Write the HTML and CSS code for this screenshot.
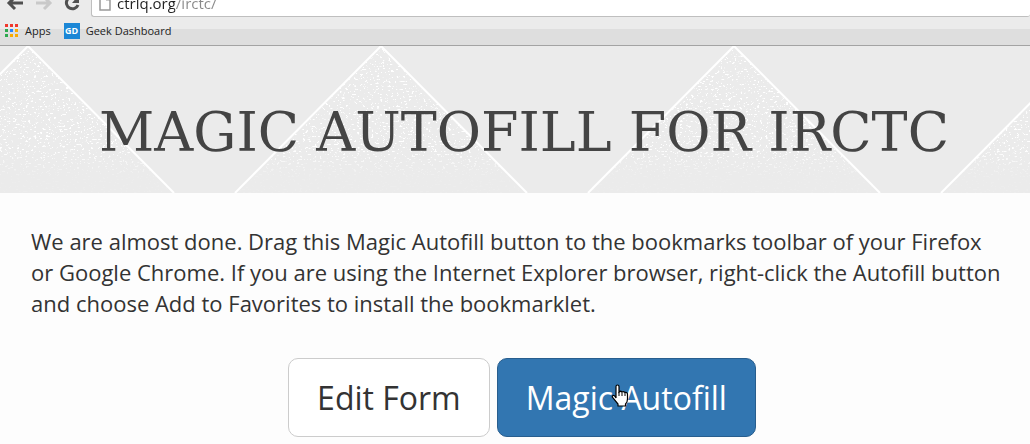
FILE: index.html
```
<!DOCTYPE html>
<html lang="en">
<head>
<meta charset="utf-8">
<title>Magic Autofill for IRCTC</title>
<link rel="stylesheet" href="styles.css">
</head>
<body>
<header class="browser">
  <div class="toolbar">
    <button class="nav" aria-label="Back"><svg width="18" height="18" viewBox="0 0 18 18"><path d="M17 9H4M9 3L3 9l6 6" fill="none" stroke="#505050" stroke-width="3"/></svg></button>
    <button class="nav" aria-label="Forward" disabled><svg width="18" height="18" viewBox="0 0 18 18"><path d="M1 9h13M9 3l6 6-6 6" fill="none" stroke="#c9c9c9" stroke-width="3"/></svg></button>
    <button class="nav" aria-label="Reload"><svg width="18" height="18" viewBox="0 0 18 18"><path d="M14 11a6 6 0 1 1-2-7" fill="none" stroke="#505050" stroke-width="3"/><path d="M15 1v8H8z" fill="#505050"/></svg></button>
    <div class="omnibox">
      <svg class="page-icon" width="12" height="16" viewBox="0 0 12 16"><path d="M1 1h6l4 4v10H1z" fill="#fff" stroke="#999" stroke-width="1.5"/><path d="M7 1v4h4" fill="none" stroke="#999"/></svg>
      <input class="url" type="text" aria-label="Address" value="ctrlq.org/irctc/">
    </div>
  </div>
  <nav class="bookmarks">
    <a class="bookmark" href="#apps">
      <svg width="14" height="14" viewBox="0 0 14 14"><path d="M0 0h3v3H0zM5 0h3v3H5zM10 0h3v3h-3z" fill="#f0382c"/><path d="M0 5h3v3H0zM0 10h3v3H0z" fill="#2da94f"/><path d="M5 5h3v3H5z" fill="#2684fc"/><path d="M10 5h3v3h-3zM5 10h3v3H5zM10 10h3v3h-3z" fill="#f9ab00"/></svg>
      <span>Apps</span>
    </a>
    <a class="bookmark" href="#geek-dashboard"><span class="favicon" aria-hidden="true">GD</span><span>Geek Dashboard</span></a>
  </nav>
</header>
<section class="banner">
  <svg class="texture" width="100%" height="100%" aria-hidden="true">
    <defs>
      <filter id="specks" x="0" y="0" width="100%" height="100%" color-interpolation-filters="sRGB">
        <feTurbulence type="fractalNoise" baseFrequency="0.35 0.6" numOctaves="2" seed="7" result="n"/>
        <feColorMatrix in="n" values="0 0 0 0 1  0 0 0 0 1  0 0 0 0 1  0 0 0 14 -8.8" result="s"/>
        <feComposite in="s" in2="SourceGraphic" operator="in"/>
      </filter>
      <linearGradient id="fade" x1="0" y1="0" x2="0" y2="1">
        <stop offset="0" stop-color="#fff"/>
        <stop offset=".7" stop-color="#fff"/>
        <stop offset=".9" stop-color="#fff" stop-opacity=".1"/>
      </linearGradient>
      <pattern id="peak-fill" x="28" width="353" height="147" patternUnits="userSpaceOnUse">
        <path d="M0 0L146 147H0zM353 0L207 147H353z" fill="url(#fade)"/>
      </pattern>
      <pattern id="peak-line" x="28" width="353" height="147" patternUnits="userSpaceOnUse">
        <path d="M0 0L146 147M353 0L207 147" fill="none" stroke="#fff" stroke-width="2"/>
      </pattern>
    </defs>
    <rect width="100%" height="100%" fill="url(#peak-fill)" filter="url(#specks)"/>
    <rect width="100%" height="100%" fill="url(#peak-line)"/>
  </svg>
  <h1 class="title">MAGIC AUTOFILL FOR IRCTC</h1>
</section>
<main class="content">
  <p class="intro">We are almost done. Drag this Magic Autofill button to the bookmarks toolbar of your Firefox or Google Chrome. If you are using the Internet Explorer browser, right-click the Autofill button and choose Add to Favorites to install the bookmarklet.</p>
  <div class="actions">
    <button class="btn">Edit Form</button>
    <a class="btn btn-primary" href="#autofill">Magic Autofill
      <svg class="pointer" width="18" height="24" viewBox="0 0 18 24" aria-hidden="true"><path d="M5 13V2.500Q5 1 6.500 1T8 2.500V8q1.500-1.500 3 0 1.500-1 3 .5 2.500-.5 2.500 2V15q0 3-2 5v2H7v-2l-5-6q-1.500-2 0-2.500T5 14z" fill="#fff" stroke="#000" stroke-width="1.200"/><path d="M8 8v4M11 8.500V12M14 9v3" stroke="#000" fill="none"/></svg>
    </a>
  </div>
</main>
</body>
</html>
```
FILE: styles.css
```
* { box-sizing: border-box; }
body { margin: 0; background: #fdfdfd; color: #333; font-family: "Open Sans", sans-serif; }
.browser { background: #ebebeb; border-bottom: 1px solid #a3a3a3; }
.toolbar { display: flex; align-items: flex-end; height: 17px; overflow: hidden; padding-left: 6px; gap: 11px; }
.nav { display: flex; flex: none; padding: 0; margin-bottom: 5px; border: 0; background: none; }
.omnibox { display: flex; flex: 1; align-items: center; gap: 6px; height: 28px; margin-left: -2px; padding-left: 7px; background: #fff; border: 1px solid #bfbfbf; border-right: 0; border-radius: 3px; }
.page-icon { flex: none; }
.url { flex: 1; min-width: 0; padding: 0; border: 0; outline: 0; font: 15px/20px "Open Sans", sans-serif; color: transparent; background: linear-gradient(to right, #222 58px, #888 58px) text; }
.bookmarks { display: flex; align-items: center; gap: 13px; height: 28px; padding: 0 5px 1px; background: linear-gradient(#ebebeb 12px, #dedede 12px); font-size: 11px; }
.bookmark { display: flex; align-items: center; gap: 6px; color: #222; text-decoration: none; }
.favicon { width: 16px; height: 16px; background: #1c87d6; color: #fff; font: bold 9px/16px "Open Sans", sans-serif; text-align: center; }
.banner { position: relative; padding: 57px 4px 30px 22px; background: #ebebeb; text-align: center; }
.texture { position: absolute; inset: 0; }
.title { position: relative; margin: 0; color: #444; font: 400 54px/60px "DejaVu Serif", serif; }
.content { padding: 33px 23px 7px 31px; }
.intro { margin: 0; font-size: 22px; line-height: 31px; }
.actions { display: flex; justify-content: center; gap: 7px; margin: 39px 0 0 6px; }
.btn { position: relative; padding: 16px 28px; border: 1px solid #ccc; border-radius: 10px; background: #fff; color: #333; font: 400 32px/45px "Open Sans", sans-serif; text-decoration: none; }
.btn-primary { background: #3276b1; border-color: #285e8e; color: #fff; }
.pointer { position: absolute; left: 113px; top: 25px; }
```
